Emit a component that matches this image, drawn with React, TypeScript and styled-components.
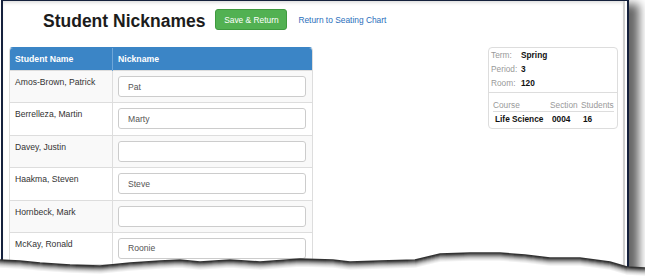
import { styled, createGlobalStyle } from 'styled-components';

const students = [
  { name: 'Amos-Brown, Patrick', nick: 'Pat' },
  { name: 'Berrelleza, Martin', nick: 'Marty' },
  { name: 'Davey, Justin', nick: '' },
  { name: 'Haakma, Steven', nick: 'Steve' },
  { name: 'Hornbeck, Mark', nick: '' },
  { name: 'McKay, Ronald', nick: 'Roonie' },
];

// torn paper edge along the bottom of the screenshot
const edge: [number, number][] = [
  [0, 260], [20, 261], [40, 263], [70, 265], [100, 266], [130, 263], [160, 261],
  [180, 260], [200, 262], [230, 260], [260, 262], [300, 259], [333, 260],
  [350, 262], [380, 261], [415, 260], [440, 254], [470, 253], [500, 253],
  [525, 255], [550, 258], [580, 258], [610, 262], [627, 267], [645, 268],
];
const edgeLine = edge.map(([x, y]) => `${x},${y}`).join(' ');
const shadowTones = ['#f2f2f2', '#e4e4e4', '#d2d2d2', '#bababa', '#9c9c9c', '#7a7a7a', '#555', '#333'];

const GlobalStyle = createGlobalStyle`
  html, body {
    margin: 0;
    padding: 0;
    background: #fff;
  }
  body {
    font-family: "Liberation Sans", Arial, sans-serif;
  }
`;

const Shot = styled.div`
  position: relative;
  width: 645px;
  height: 278px;
  overflow: hidden;
  background: #fff;
`;

const Frame = styled.div`
  box-sizing: border-box;
  margin-left: 1px;
  width: 628px;
  height: 274px;
  border-left: 2px solid #15213d;
  border-right: 2px solid #15213d;
  border-top: 1px solid #15213d;
  background: #fff;
  box-shadow: 10px 4px 9px rgba(0, 0, 0, 0.6);
  display: flex;
`;

const Page = styled.div`
  flex: 1;
  margin-right: 2px;
  border-right: 2px solid #cfcfcf;
  box-shadow: inset 0 3px 4px -2px rgba(0, 0, 0, 0.18);
  padding: 8px 5px 0 6px;
`;

const Header = styled.div`
  display: flex;
  align-items: center;
  padding-left: 34px;
  height: 21px;
`;

const Title = styled.h1`
  margin: 3px 10px 0 0;
  font-size: 17.5px;
  line-height: 21px;
  font-weight: bold;
  color: #1c1c1c;
`;

const SaveButton = styled.button`
  box-sizing: border-box;
  width: 72px;
  height: 21px;
  padding: 0;
  border: 1px solid #3f9a3f;
  border-radius: 3px;
  background: #52b152;
  color: #fff;
  font-family: inherit;
  font-size: 8.4px;
`;

const BackLink = styled.a`
  margin-left: 11px;
  font-size: 8.4px;
  color: #2a6ebb;
  text-decoration: none;
`;

const Main = styled.div`
  display: flex;
  justify-content: space-between;
  align-items: flex-start;
  margin-top: 17px;
`;

const TableBox = styled.div`
  width: 304px;
  box-sizing: border-box;
  border: 1px solid #ddd;
  border-top-color: #3b85c6;
  border-radius: 4px 4px 0 0;
  overflow: hidden;
`;

const NickTable = styled.table`
  width: 100%;
  border-collapse: collapse;
  table-layout: fixed;
  font-size: 8.6px;
  color: #333;
`;

const HeadCell = styled.th`
  height: 22px;
  padding: 0 5px;
  background: #3b85c6;
  color: #fff;
  text-align: left;
  font-weight: bold;
  font-size: 8.7px;
  &:first-child {
    width: 92px;
    border-right: 1px solid #6ea6d8;
  }
`;

const StudentRow = styled.tr<{ $striped: boolean }>`
  background: ${(p) => (p.$striped ? '#f9f9f9' : '#fff')};
  border-top: 1px solid #ddd;
`;

const NameCell = styled.td`
  vertical-align: top;
  padding: 5px 5px 5.4px;
  line-height: 12px;
  border-right: 1px solid #ddd;
`;

const NickCell = styled.td`
  vertical-align: top;
  padding: 5px 5px 5.4px;
`;

const NickInput = styled.input`
  display: block;
  box-sizing: border-box;
  width: 188px;
  height: 21px;
  padding: 0 9px;
  border: 1px solid #ccc;
  border-radius: 3px;
  background: #fff;
  font-family: inherit;
  font-size: 8.6px;
  color: #555;
  outline: none;
`;

const InfoPanel = styled.div`
  width: 130px;
  box-sizing: border-box;
  border: 1px solid #ddd;
  border-radius: 4px;
  font-size: 8.3px;
`;

const InfoRow = styled.div`
  display: flex;
  height: 14px;
  align-items: center;
  padding-left: 2px;
`;

const Label = styled.span`
  width: 30px;
  color: #999;
`;

const Value = styled.span`
  font-weight: bold;
  color: #111;
`;

const CourseBox = styled.div`
  margin-top: 2px;
  border-top: 1px solid #ddd;
  padding: 5px 3px 3px 4px;
`;

const CourseGrid = styled.div<{ $head?: boolean }>`
  display: grid;
  grid-template-columns: 57px 31px 33px;
  height: 13px;
  align-items: center;
  white-space: nowrap;
  color: ${(p) => (p.$head ? '#999' : '#111')};
  font-weight: ${(p) => (p.$head ? 'normal' : 'bold')};
  border-bottom: ${(p) => (p.$head ? '1px solid #ddd' : 'none')};
  span {
    padding-left: ${(p) => (p.$head ? '0' : '2px')};
  }
`;

const TornEdge = styled.svg`
  position: absolute;
  left: 0;
  top: 0;
  pointer-events: none;
`;

const App = () => {
  return (
    <Shot>
      <GlobalStyle />
      <Frame>
        <Page>
          <Header>
            <Title>Student Nicknames</Title>
            <SaveButton type="button">Save &amp; Return</SaveButton>
            <BackLink href="#">Return to Seating Chart</BackLink>
          </Header>
          <Main>
            <TableBox>
              <NickTable>
                <thead>
                  <tr>
                    <HeadCell>Student Name</HeadCell>
                    <HeadCell>Nickname</HeadCell>
                  </tr>
                </thead>
                <tbody>
                  {students.map((s, i) => (
                    <StudentRow key={s.name} $striped={i % 2 === 0}>
                      <NameCell>{s.name}</NameCell>
                      <NickCell>
                        <NickInput defaultValue={s.nick} />
                      </NickCell>
                    </StudentRow>
                  ))}
                </tbody>
              </NickTable>
            </TableBox>

            <InfoPanel>
              <InfoRow>
                <Label>Term:</Label>
                <Value>Spring</Value>
              </InfoRow>
              <InfoRow>
                <Label>Period:</Label>
                <Value>3</Value>
              </InfoRow>
              <InfoRow>
                <Label>Room:</Label>
                <Value>120</Value>
              </InfoRow>
              <CourseBox>
                <CourseGrid $head>
                  <span>Course</span>
                  <span>Section</span>
                  <span>Students</span>
                </CourseGrid>
                <CourseGrid>
                  <span>Life Science</span>
                  <span>0004</span>
                  <span>16</span>
                </CourseGrid>
              </CourseBox>
            </InfoPanel>
          </Main>
        </Page>
      </Frame>

      <TornEdge viewBox="0 0 645 278" width="645" height="278">
        <polygon points={`${edgeLine} 645,278 0,278`} fill="#fff" />
        {shadowTones.map((c, i) => (
          <polyline
            key={c}
            points={edgeLine}
            transform={`translate(0 ${shadowTones.length - 1 - i})`}
            fill="none"
            stroke={c}
            strokeWidth={1.5}
          />
        ))}
      </TornEdge>
    </Shot>
  );
};

export default App;
